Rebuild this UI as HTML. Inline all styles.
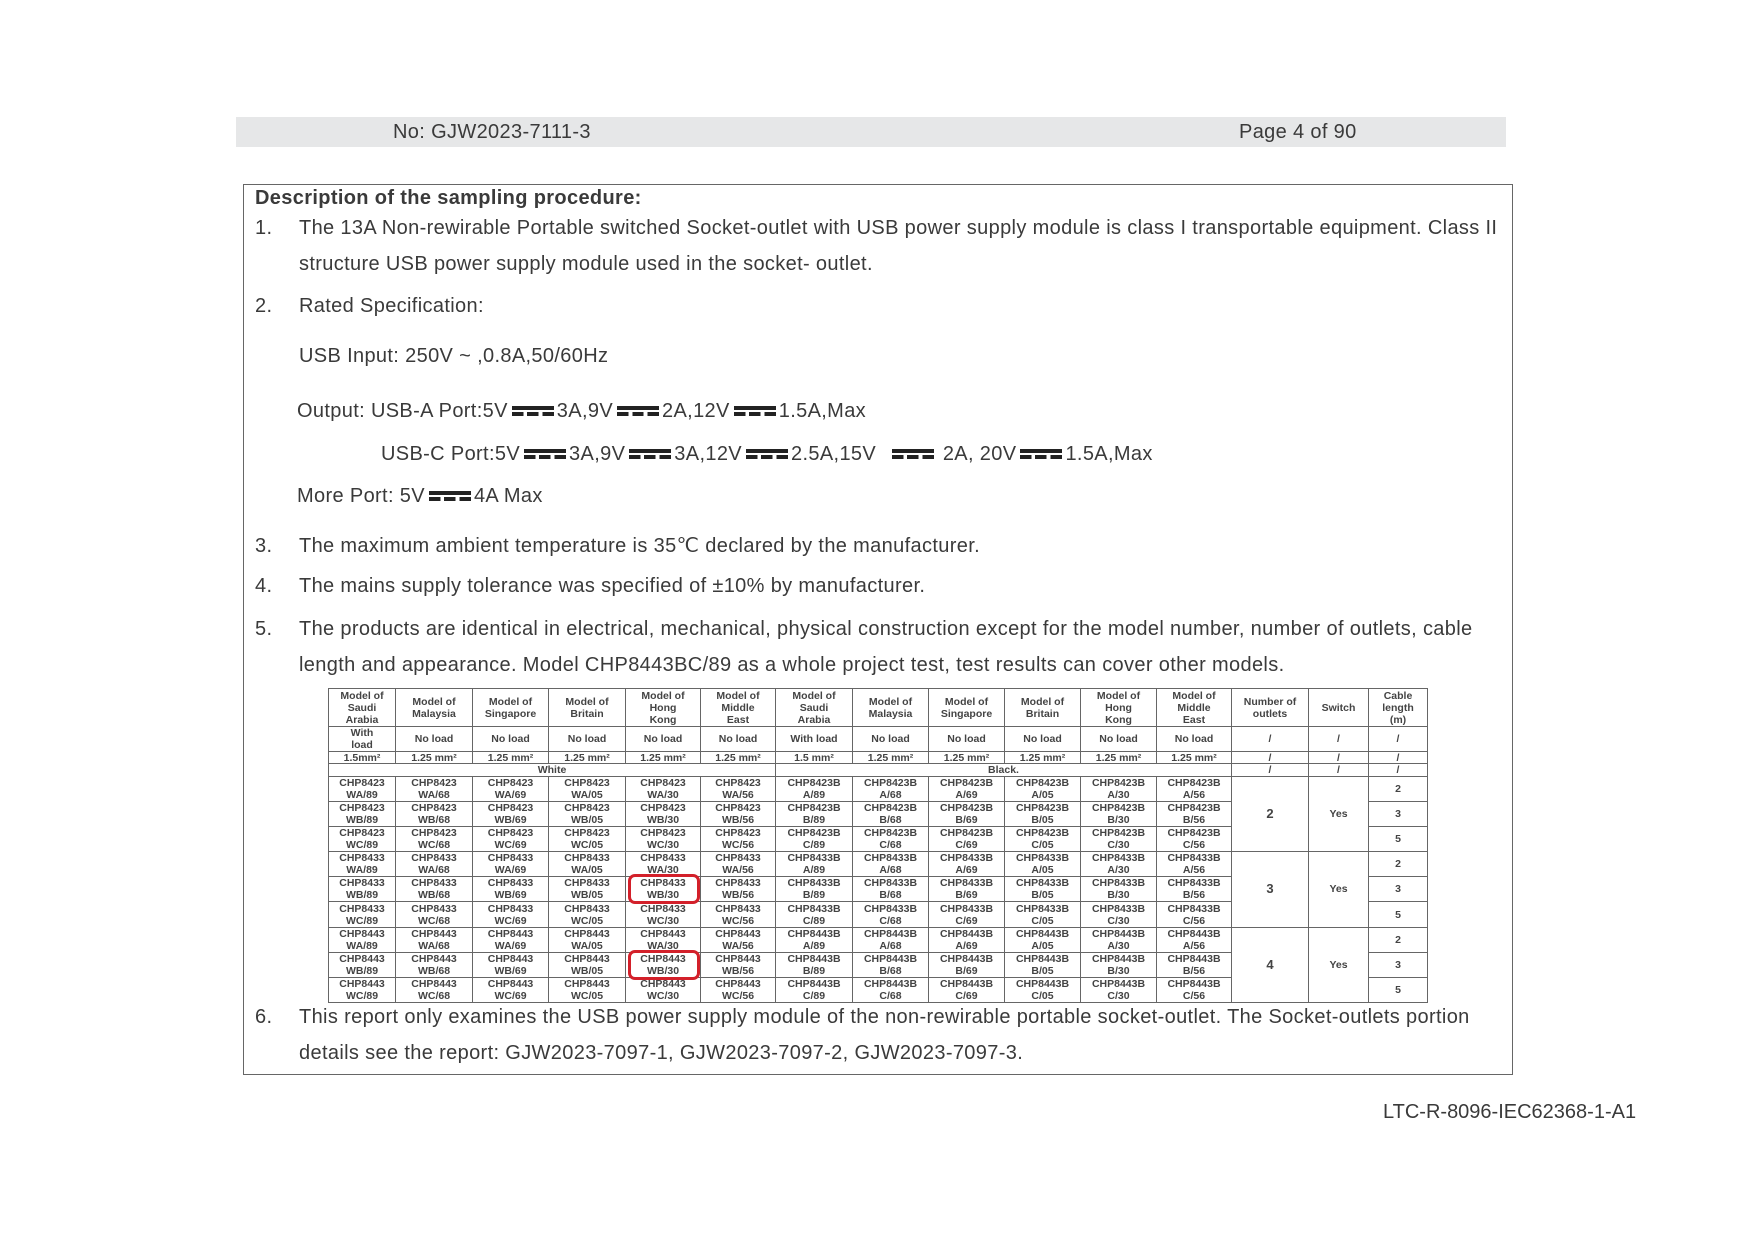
<!DOCTYPE html>
<html><head><meta charset="utf-8">
<style>
*{margin:0;padding:0;box-sizing:border-box}
body{width:1755px;height:1241px;background:#fff;position:relative;font-family:"Liberation Sans",Arial,sans-serif;color:#3a3a3a;overflow:hidden}
.a{position:absolute;white-space:nowrap;font-size:20px;line-height:24px;letter-spacing:0.35px}
.bar{position:absolute;left:236px;top:117px;width:1278px;height:30px;background:#e6e7e8}
.box{position:absolute;left:243px;top:184px;width:1278px;height:898px;border:1.5px solid #666}
.dc{display:inline-block;width:42px;height:11px;vertical-align:0px;margin:0 3px 0 4px;position:relative}
.dc:before{content:"";position:absolute;left:0;top:0;width:42px;height:4px;background:#222}
.dc:after{content:"";position:absolute;left:0;top:6px;width:42px;height:4px;background:repeating-linear-gradient(90deg,#222 0 11.5px,transparent 11.5px 15.25px)}
table{position:absolute;left:328px;top:688px;border-collapse:collapse;table-layout:fixed;font-size:10.5px;font-weight:bold;color:#444;line-height:12px}
td{border:1.5px solid #666;text-align:center;vertical-align:middle;padding:0;overflow:hidden}
tr.h td{height:38px}tr.l td{height:25px}tr.m td{height:12px;line-height:10px}tr.c td{height:13px;line-height:11px}tr.d td{height:25.1px}
.big{font-size:13px}
.oval{position:absolute;border:3px solid #d3202a;border-radius:7px}
</style></head><body>
<div class="bar" style="width:1270px"></div>
<div class="a" style="left:393px;top:120px">No: GJW2023-7111-3</div>
<div class="a" style="left:1239px;top:120px">Page 4 of 90</div>
<div class="box" style="width:1270px;height:891px"></div>
<div class="a" style="left:255px;top:186px;font-weight:bold">Description of the sampling procedure:</div>
<div class="a" style="left:255px;top:216px">1.</div>
<div class="a" style="left:299px;top:216px">The 13A Non-rewirable Portable switched Socket-outlet with USB power supply module is class I transportable equipment. Class II</div>
<div class="a" style="left:299px;top:252px">structure USB power supply module used in the socket- outlet.</div>
<div class="a" style="left:255px;top:294px">2.</div>
<div class="a" style="left:299px;top:294px">Rated Specification:</div>
<div class="a" style="left:299px;top:344px">USB Input: 250V ~ ,0.8A,50/60Hz</div>
<div class="a" style="left:297px;top:399px">Output: USB-A Port:5V<span class="dc"></span>3A,9V<span class="dc"></span>2A,12V<span class="dc"></span>1.5A,Max</div>
<div class="a" style="left:381px;top:442px">USB-C Port:5V<span class="dc"></span>3A,9V<span class="dc"></span>3A,12V<span class="dc"></span>2.5A,15V &nbsp;<span class="dc"></span> 2A, 20V<span class="dc"></span>1.5A,Max</div>
<div class="a" style="left:297px;top:484px">More Port: 5V<span class="dc"></span>4A Max</div>
<div class="a" style="left:255px;top:534px">3.</div>
<div class="a" style="left:299px;top:534px">The maximum ambient temperature is 35℃ declared by the manufacturer.</div>
<div class="a" style="left:255px;top:574px">4.</div>
<div class="a" style="left:299px;top:574px">The mains supply tolerance was specified of ±10% by manufacturer.</div>
<div class="a" style="left:255px;top:617px">5.</div>
<div class="a" style="left:299px;top:617px">The products are identical in electrical, mechanical, physical construction except for the model number, number of outlets, cable</div>
<div class="a" style="left:299px;top:653px">length and appearance. Model CHP8443BC/89 as a whole project test, test results can cover other models.</div>
<table>
<colgroup><col style="width:67px"><col style="width:77px"><col style="width:76px"><col style="width:77px"><col style="width:75px"><col style="width:75px"><col style="width:77px"><col style="width:76px"><col style="width:76px"><col style="width:76px"><col style="width:76px"><col style="width:75px"><col style="width:77px"><col style="width:60px"><col style="width:59px"></colgroup>
<tr class="h"><td>Model of<br>Saudi<br>Arabia</td><td>Model of<br>Malaysia</td><td>Model of<br>Singapore</td><td>Model of<br>Britain</td><td>Model of<br>Hong<br>Kong</td><td>Model of<br>Middle<br>East</td><td>Model of<br>Saudi<br>Arabia</td><td>Model of<br>Malaysia</td><td>Model of<br>Singapore</td><td>Model of<br>Britain</td><td>Model of<br>Hong<br>Kong</td><td>Model of<br>Middle<br>East</td><td>Number of<br>outlets</td><td>Switch</td><td>Cable<br>length<br>(m)</td></tr>
<tr class="l"><td>With<br>load</td><td>No load</td><td>No load</td><td>No load</td><td>No load</td><td>No load</td><td>With load</td><td>No load</td><td>No load</td><td>No load</td><td>No load</td><td>No load</td><td>/</td><td>/</td><td>/</td></tr>
<tr class="m"><td>1.5mm²</td><td>1.25 mm²</td><td>1.25 mm²</td><td>1.25 mm²</td><td>1.25 mm²</td><td>1.25 mm²</td><td>1.5 mm²</td><td>1.25 mm²</td><td>1.25 mm²</td><td>1.25 mm²</td><td>1.25 mm²</td><td>1.25 mm²</td><td>/</td><td>/</td><td>/</td></tr>
<tr class="c"><td colspan="6">White</td><td colspan="6">Black.</td><td>/</td><td>/</td><td>/</td></tr>
<tr class="d"><td>CHP8423<br>WA/89</td><td>CHP8423<br>WA/68</td><td>CHP8423<br>WA/69</td><td>CHP8423<br>WA/05</td><td>CHP8423<br>WA/30</td><td>CHP8423<br>WA/56</td><td>CHP8423B<br>A/89</td><td>CHP8423B<br>A/68</td><td>CHP8423B<br>A/69</td><td>CHP8423B<br>A/05</td><td>CHP8423B<br>A/30</td><td>CHP8423B<br>A/56</td><td rowspan="3" class="big">2</td><td rowspan="3">Yes</td><td>2</td></tr>
<tr class="d"><td>CHP8423<br>WB/89</td><td>CHP8423<br>WB/68</td><td>CHP8423<br>WB/69</td><td>CHP8423<br>WB/05</td><td>CHP8423<br>WB/30</td><td>CHP8423<br>WB/56</td><td>CHP8423B<br>B/89</td><td>CHP8423B<br>B/68</td><td>CHP8423B<br>B/69</td><td>CHP8423B<br>B/05</td><td>CHP8423B<br>B/30</td><td>CHP8423B<br>B/56</td><td>3</td></tr>
<tr class="d"><td>CHP8423<br>WC/89</td><td>CHP8423<br>WC/68</td><td>CHP8423<br>WC/69</td><td>CHP8423<br>WC/05</td><td>CHP8423<br>WC/30</td><td>CHP8423<br>WC/56</td><td>CHP8423B<br>C/89</td><td>CHP8423B<br>C/68</td><td>CHP8423B<br>C/69</td><td>CHP8423B<br>C/05</td><td>CHP8423B<br>C/30</td><td>CHP8423B<br>C/56</td><td>5</td></tr>
<tr class="d"><td>CHP8433<br>WA/89</td><td>CHP8433<br>WA/68</td><td>CHP8433<br>WA/69</td><td>CHP8433<br>WA/05</td><td>CHP8433<br>WA/30</td><td>CHP8433<br>WA/56</td><td>CHP8433B<br>A/89</td><td>CHP8433B<br>A/68</td><td>CHP8433B<br>A/69</td><td>CHP8433B<br>A/05</td><td>CHP8433B<br>A/30</td><td>CHP8433B<br>A/56</td><td rowspan="3" class="big">3</td><td rowspan="3">Yes</td><td>2</td></tr>
<tr class="d"><td>CHP8433<br>WB/89</td><td>CHP8433<br>WB/68</td><td>CHP8433<br>WB/69</td><td>CHP8433<br>WB/05</td><td>CHP8433<br>WB/30</td><td>CHP8433<br>WB/56</td><td>CHP8433B<br>B/89</td><td>CHP8433B<br>B/68</td><td>CHP8433B<br>B/69</td><td>CHP8433B<br>B/05</td><td>CHP8433B<br>B/30</td><td>CHP8433B<br>B/56</td><td>3</td></tr>
<tr class="d"><td>CHP8433<br>WC/89</td><td>CHP8433<br>WC/68</td><td>CHP8433<br>WC/69</td><td>CHP8433<br>WC/05</td><td>CHP8433<br>WC/30</td><td>CHP8433<br>WC/56</td><td>CHP8433B<br>C/89</td><td>CHP8433B<br>C/68</td><td>CHP8433B<br>C/69</td><td>CHP8433B<br>C/05</td><td>CHP8433B<br>C/30</td><td>CHP8433B<br>C/56</td><td>5</td></tr>
<tr class="d"><td>CHP8443<br>WA/89</td><td>CHP8443<br>WA/68</td><td>CHP8443<br>WA/69</td><td>CHP8443<br>WA/05</td><td>CHP8443<br>WA/30</td><td>CHP8443<br>WA/56</td><td>CHP8443B<br>A/89</td><td>CHP8443B<br>A/68</td><td>CHP8443B<br>A/69</td><td>CHP8443B<br>A/05</td><td>CHP8443B<br>A/30</td><td>CHP8443B<br>A/56</td><td rowspan="3" class="big">4</td><td rowspan="3">Yes</td><td>2</td></tr>
<tr class="d"><td>CHP8443<br>WB/89</td><td>CHP8443<br>WB/68</td><td>CHP8443<br>WB/69</td><td>CHP8443<br>WB/05</td><td>CHP8443<br>WB/30</td><td>CHP8443<br>WB/56</td><td>CHP8443B<br>B/89</td><td>CHP8443B<br>B/68</td><td>CHP8443B<br>B/69</td><td>CHP8443B<br>B/05</td><td>CHP8443B<br>B/30</td><td>CHP8443B<br>B/56</td><td>3</td></tr>
<tr class="d"><td>CHP8443<br>WC/89</td><td>CHP8443<br>WC/68</td><td>CHP8443<br>WC/69</td><td>CHP8443<br>WC/05</td><td>CHP8443<br>WC/30</td><td>CHP8443<br>WC/56</td><td>CHP8443B<br>C/89</td><td>CHP8443B<br>C/68</td><td>CHP8443B<br>C/69</td><td>CHP8443B<br>C/05</td><td>CHP8443B<br>C/30</td><td>CHP8443B<br>C/56</td><td>5</td></tr>
</table>
<div class="oval" style="left:628px;top:874px;width:72px;height:30px"></div>
<div class="oval" style="left:628px;top:950px;width:72px;height:30px"></div>
<div class="a" style="left:255px;top:1005px">6.</div>
<div class="a" style="left:299px;top:1005px">This report only examines the USB power supply module of the non-rewirable portable socket-outlet. The Socket-outlets portion</div>
<div class="a" style="left:299px;top:1041px">details see the report: GJW2023-7097-1, GJW2023-7097-2, GJW2023-7097-3.</div>
<div class="a" style="left:1383px;top:1100px;letter-spacing:0">LTC-R-8096-IEC62368-1-A1</div>
</body></html>
